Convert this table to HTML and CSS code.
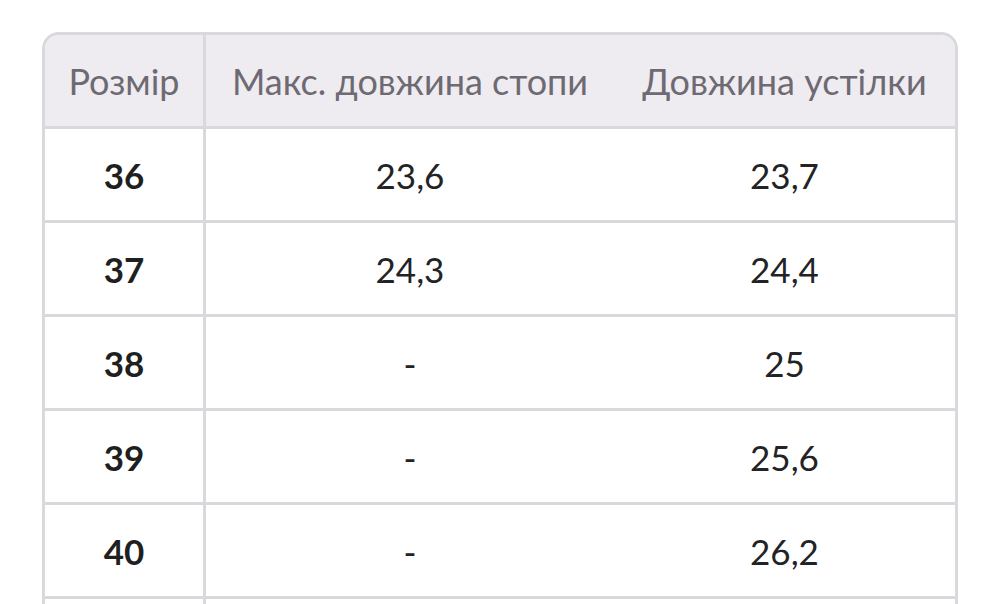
FILE: index.html
```html
<!DOCTYPE html>
<html lang="uk">
<head>
<meta charset="utf-8">
<link rel="stylesheet" href="styles.css">
</head>
<body>
<div class="wrap">
  <table class="sizes">
    <colgroup>
      <col class="c1"><col class="c2"><col class="c3">
    </colgroup>
    <thead>
      <tr><th class="first">Розмір</th><th>Макс. довжина стопи</th><th>Довжина устілки</th></tr>
    </thead>
    <tbody>
      <tr><td class="first">36</td><td>23,6</td><td>23,7</td></tr>
      <tr><td class="first">37</td><td>24,3</td><td>24,4</td></tr>
      <tr><td class="first">38</td><td>-</td><td>25</td></tr>
      <tr><td class="first">39</td><td>-</td><td>25,6</td></tr>
      <tr><td class="first">40</td><td>-</td><td>26,2</td></tr>
      <tr class="tail"><td class="first"></td><td></td><td></td></tr>
    </tbody>
  </table>
</div>
</body>
</html>
```
FILE: styles.css
```css
html, body {
  margin: 0;
  padding: 0;
  background: #ffffff;
  overflow: hidden;
  height: 604px;
}
.wrap {
  padding: 32px 0 0 42px;
}
.sizes {
  width: 916px;
  table-layout: fixed;
  border-collapse: separate;
  border-spacing: 0;
  border: 3px solid #d9d8dc;
  border-radius: 17px 17px 0 0;
  overflow: hidden;
  font-family: Lato, "Liberation Sans", sans-serif;
  font-size: 35px;
}
.c1 { width: 161px; }
.c2 { width: 408px; }
.c3 { width: auto; }
.sizes th {
  background: #eeecf0;
  color: #6e6a73;
  font-weight: 400;
  font-size: 36px;
  height: 91px;
  padding: 0;
  text-align: center;
  vertical-align: middle;
}
.sizes td {
  height: 91px;
  padding: 0;
  text-align: center;
  vertical-align: middle;
  color: #232326;
  border-top: 3px solid #d9d8dc;
}
.sizes .first {
  border-right: 3px solid #d9d8dc;
}
.sizes td.first {
  font-weight: 700;
  color: #1f1f22;
}
```
